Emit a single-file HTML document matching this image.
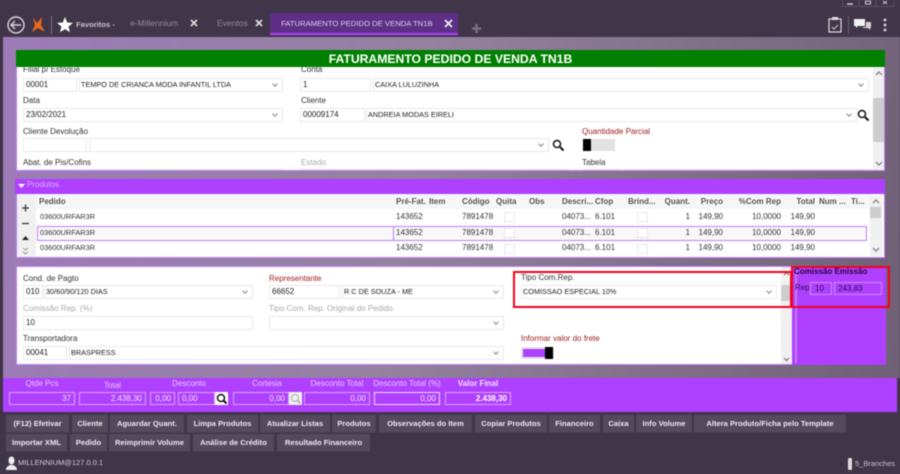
<!DOCTYPE html>
<html><head><meta charset="utf-8">
<style>
html,body{margin:0;padding:0;width:900px;height:474px;overflow:hidden;background:#41354a}
#p{position:relative;width:900px;height:474px;overflow:hidden;font:8px "Liberation Sans",sans-serif;color:#333;filter:blur(.6px)}
#p div,#p span,#p svg{position:absolute}
.b{left:3px;top:37px;width:897px;height:341px;background:linear-gradient(100deg,#9d7bb8 0%,#94829f 45%,#6f6076 100%)}
.w{background:#fff}
.l{white-space:nowrap;line-height:10px;color:#333}
.r{color:#a01f1f}.g{color:#aaa}
.i{box-sizing:border-box;background:#fff;border:1px solid #e8e8e8;line-height:11px;padding-left:2px;white-space:nowrap;overflow:hidden;color:#222}
.n{font-size:7.300px;padding-left:1px}
.c::after{content:"";position:absolute;right:5px;top:3px;width:3px;height:3px;border:solid #888;border-width:0 1px 1px 0;transform:rotate(45deg)}
.t{white-space:nowrap;line-height:10px;color:#333}
.e{text-align:right;width:60px}
.k{box-sizing:border-box;width:11px;height:10px;border:1px solid #e6e6e6;background:#fff}
.h{font-weight:bold;color:#555}
.f{box-sizing:border-box;border:1px solid #d9a6ff;color:#f3e3ff;line-height:11px;text-align:right;padding-right:3px;white-space:nowrap;height:13px;top:392px}
.fl{top:379px;color:#e7c9ff;white-space:nowrap;text-align:center;line-height:10px}
.bt{background:#544a5c;border-bottom:1px solid #4a3f52;color:#eee8f2;font-weight:bold;font-size:7.600px;text-align:center;line-height:17px;height:17px;white-space:nowrap}
.tb{color:#948b9a;top:18px;line-height:11px;font-size:8.500px;white-space:nowrap}
</style></head><body><div id="p">
<div class="b"></div>

<!-- top bar -->
<svg style="left:0;top:0" width="900" height="37" viewBox="0 0 900 37">
<circle cx="16" cy="25" r="8" fill="none" stroke="#d8d4dc" stroke-width="1.400"/>
<path d="M21 25H11M15 21l-4 4 4 4" fill="none" stroke="#d8d4dc" stroke-width="1.400"/>
<path d="M42 17 37 23 33 18 35 25 32 32 38 28 45 32 41 25Z" fill="#e8691a"/>
<path d="M51.500 16V34" stroke="#7b7182"/>
<path d="M65 17l2.200 5.500 5.800.4-4.500 3.700 1.500 5.600-5-3.100-5 3.100 1.500-5.600-4.500-3.700 5.800-.4Z" fill="#fff"/>
<path d="M191 20l6 6M197 20l-6 6M256 20l6 6M262 20l-6 6" stroke="#ddd" stroke-width="1.700"/>
<path d="M476.500 24v9M472 28.500h9" stroke="#7a7180" stroke-width="2.500"/>
<path d="M842.500 0v6.500H859V0M859.500 6.500H876V0M876.500 6.500H894V0" fill="none" stroke="#5b5070"/>
<path d="M847 4h6" stroke="#ccc" stroke-width="1.500"/><rect x="865.500" y="1" width="5" height="3" fill="none" stroke="#ccc"/>
<path d="M883 1l4 3M887 1l-4 3" stroke="#ccc"/>
<rect x="829" y="19" width="12" height="13" fill="none" stroke="#ddd" stroke-width="1.200"/>
<rect x="832" y="17" width="6" height="3" fill="#ddd"/>
<path d="M832 27l2 2 4-4" fill="none" stroke="#ccc"/>
<path d="M848.500 16v18" stroke="#6a5f72"/>
<path d="M854 19h11v7h-7l-2 2v-2h-2Z" fill="#f2f2f2"/><path d="M866 22h5v6h-1v2l-2-2h-5v-1h3Z" fill="#d5d5d5"/>
<circle cx="885" cy="20" r="1.400" fill="#ddd"/><circle cx="885" cy="25" r="1.400" fill="#ddd"/><circle cx="885" cy="30" r="1.400" fill="#ddd"/>
</svg>
<div class="tb" style="left:76px;top:19px;font-size:7.600px;font-weight:bold;color:#c8c3cc">Favoritos -</div>
<div class="tb" style="left:130px">e-Millennium</div>
<div class="tb" style="left:217px">Eventos</div>
<div style="left:270px;top:13px;width:188px;height:20px;background:#5e2f86"></div>
<div style="left:270px;top:33px;width:188px;height:2px;background:#b040ff"></div>
<div class="tb" style="left:281px;font-size:7.700px;color:#ddd0e6">FATURAMENTO PEDIDO DE VENDA TN1B</div>
<svg style="left:444px;top:19px" width="10" height="10"><path d="M1 1l7 7M8 1l-7 7" stroke="#eee" stroke-width="1.700"/></svg>

<!-- header -->
<div style="left:16px;top:50px;width:869px;height:17px;background:#008000;color:#fff;font:bold 12.200px/18px 'Liberation Sans',sans-serif;text-align:center">FATURAMENTO PEDIDO DE VENDA TN1B</div>

<!-- panel 1 -->
<div class="w" style="left:16px;top:67px;width:869px;height:104px;border-bottom:1px solid #c080ff;overflow:hidden;box-sizing:border-box;border-right:1px solid #c080ff;border-left:1px solid #c080ff">
 <div class="l" style="left:6px;top:-2px">Filial p/ Estoque</div>
 <div class="l" style="left:284px;top:-2px">Conta</div>
 <div class="l" style="left:6px;top:29px">Data</div>
 <div class="l" style="left:284px;top:29px">Cliente</div>
 <div class="l" style="left:6px;top:60px">Cliente Devolução</div>
 <div class="l r" style="left:565px;top:60px">Quantidade Parcial</div>
 <div class="l" style="left:6px;top:91px">Abat. de Pis/Cofins</div>
 <div class="l g" style="left:284px;top:91px">Estado</div>
 <div class="l" style="left:565px;top:91px">Tabela</div>
 <div class="i" style="left:6px;top:11px;width:54px;height:14px">00001</div>
 <div class="i c n" style="left:62px;top:11px;width:204px;height:14px">TEMPO DE CRIANCA MODA INFANTIL LTDA</div>
 <div class="i" style="left:283px;top:11px;width:71px;height:14px">1</div>
 <div class="i c n" style="left:356px;top:11px;width:496px;height:14px">CAIXA LULUZINHA</div>
 <div class="i c" style="left:6px;top:41px;width:260px;height:14px">23/02/2021</div>
 <div class="i" style="left:283px;top:41px;width:65px;height:14px">00009174</div>
 <div class="i c n" style="left:349px;top:41px;width:491px;height:14px">ANDREIA MODAS EIRELI</div>
 <div class="i" style="left:6px;top:71px;width:64px;height:14px"></div>
 <div class="i c" style="left:72px;top:71px;width:460px;height:14px"></div>
 <div class="i" style="left:6px;top:102px;width:260px;height:14px"></div>
 <div class="i" style="left:283px;top:102px;width:270px;height:14px"></div>
 <div class="i" style="left:565px;top:102px;width:39px;height:14px"></div>
 <div class="i" style="left:607px;top:102px;width:246px;height:14px"></div>
 <div style="left:566px;top:72px;width:32px;height:12px;background:#e2e2e2"></div>
 <div style="left:566px;top:72px;width:8px;height:12px;background:#000"></div>
 <div style="left:856px;top:0;width:12px;height:103px;background:#f0f0f0"></div>
 <div style="left:856px;top:31px;width:12px;height:44px;background:#cdcdcd"></div>
 <svg style="left:856px;top:0" width="12" height="103"><path d="M3 8l3-3 3 3M3 95l3 3 3-3" fill="none" stroke="#777" stroke-width="1.200"/></svg>
 <svg style="left:840px;top:42px" width="13" height="13"><circle cx="5" cy="5" r="3.500" fill="none" stroke="#111" stroke-width="1.500"/><path d="M8 8l3.500 3.500" stroke="#111" stroke-width="2"/></svg>
 <svg style="left:535px;top:72px" width="13" height="13"><circle cx="5" cy="5" r="3.500" fill="none" stroke="#111" stroke-width="1.500"/><path d="M8 8l3.500 3.500" stroke="#111" stroke-width="2"/></svg>
</div>

<!-- produtos -->
<div style="left:15px;top:179px;width:870px;height:15px;background:#b040ff"></div>
<div class="l" style="left:27px;top:180px;color:#dcb0ff">Produtos</div>
<svg style="left:18px;top:183px" width="8" height="6"><path d="M0 1h7L3.500 5Z" fill="#fff"/></svg>
<div class="w" style="left:16px;top:194px;width:869px;height:64px;box-sizing:border-box;border:solid #c080ff;border-width:0 1px 1px 1px"></div>
<div style="left:17px;top:194px;width:19px;height:63px;background:#f0f0f0"></div>
<div style="left:36px;top:194px;width:834px;height:15px;background:#f6f6f6"></div>
<svg style="left:17px;top:194px" width="19" height="63"><path d="M5 14h7M8.500 10.500v7M5 29.500h7" stroke="#333" stroke-width="1.300"/><path d="M5 46h7L8.500 42Z" fill="#222"/><path d="M6 54l2.500 2 2.500-2M6 58l2.500 2 2.500-2" fill="none" stroke="#999"/></svg>
<div class="l h" style="left:39px;top:197px">Pedido</div>
<div class="l h" style="left:396px;top:197px">Pré-Fat.</div>
<div class="l h" style="left:429px;top:197px">Item</div>
<div class="l h" style="left:462px;top:197px">Código</div>
<div class="l h" style="left:496px;top:197px">Quita</div>
<div class="l h" style="left:529px;top:197px">Obs</div>
<div class="l h" style="left:562px;top:197px">Descri...</div>
<div class="l h" style="left:595px;top:197px">Cfop</div>
<div class="l h" style="left:628px;top:197px">Brind...</div>
<div class="l h e" style="left:630px;top:197px">Quant.</div>
<div class="l h e" style="left:663px;top:197px">Preço</div>
<div class="l h e" style="left:721px;top:197px">%Com Rep</div>
<div class="l h e" style="left:755px;top:197px">Total</div>
<div class="l h" style="left:819px;top:197px">Num ...</div>
<div class="l h" style="left:851px;top:197px">Ti...</div>

<!-- row 1 -->
<div class="t" style="left:40px;top:212px;font-size:7.400px">03600URFAR3R</div><div class="t" style="left:396px;top:212px">143652</div><div class="t" style="left:462px;top:212px">7891478</div><div class="k" style="left:504px;top:212px"></div><div class="t" style="left:562px;top:212px">04073...</div><div class="t" style="left:595px;top:212px">6.101</div><div class="k" style="left:637px;top:212px"></div><div class="t e" style="left:630px;top:212px">1</div><div class="t e" style="left:663px;top:212px">149,90</div><div class="t e" style="left:721px;top:212px">10,0000</div><div class="t e" style="left:755px;top:212px">149,90</div>
<!-- row 2 -->
<div style="left:37px;top:226px;width:830px;height:15px;box-sizing:border-box;border:1.500px solid #c17eff;background:#f8f8f8"></div>
<div style="left:393px;top:227px;width:1px;height:13px;background:#c17eff"></div>
<div class="t" style="left:40px;top:228px;font-size:7.400px">03600URFAR3R</div><div class="t" style="left:396px;top:228px">143652</div><div class="t" style="left:462px;top:228px">7891478</div><div class="k" style="left:504px;top:228px"></div><div class="t" style="left:562px;top:228px">04073...</div><div class="t" style="left:595px;top:228px">6.101</div><div class="k" style="left:637px;top:228px"></div><div class="t e" style="left:630px;top:228px">1</div><div class="t e" style="left:663px;top:228px">149,90</div><div class="t e" style="left:721px;top:228px">10,0000</div><div class="t e" style="left:755px;top:228px">149,90</div>
<!-- row 3 -->
<div class="t" style="left:40px;top:243px;font-size:7.400px">03600URFAR3R</div><div class="t" style="left:396px;top:243px">143652</div><div class="t" style="left:462px;top:243px">7891478</div><div class="k" style="left:504px;top:244px"></div><div class="t" style="left:562px;top:243px">04073...</div><div class="t" style="left:595px;top:243px">6.101</div><div class="k" style="left:637px;top:244px"></div><div class="t e" style="left:630px;top:243px">1</div><div class="t e" style="left:663px;top:243px">149,90</div><div class="t e" style="left:721px;top:243px">10,0000</div><div class="t e" style="left:755px;top:243px">149,90</div>
<!-- table scroll -->
<div style="left:870px;top:196px;width:12px;height:60px;background:#f0f0f0"></div>
<div style="left:870px;top:207px;width:11px;height:11px;background:#cdcdcd"></div>
<svg style="left:870px;top:196px" width="12" height="60"><path d="M3 7l3-3 3 3M3 52l3 3 3-3" fill="none" stroke="#777" stroke-width="1.200"/></svg>

<!-- bottom panel -->
<div class="w" style="left:16px;top:266px;width:776px;height:99px;box-sizing:border-box;border:1px solid #c080ff"></div>
<div class="l" style="left:23px;top:274px">Cond. de Pagto</div>
<div class="l r" style="left:269px;top:274px">Representante</div>
<div class="l" style="left:521px;top:273px">Tipo Com.Rep.</div>
<div class="l g" style="left:23px;top:304px">Comissão Rep. (%)</div>
<div class="l g" style="left:269px;top:304px">Tipo Com. Rep. Original do Pedido</div>
<div class="l" style="left:23px;top:334px">Transportadora</div>
<div class="l r" style="left:521px;top:334px">Informar valor do frete</div>
<div class="i" style="left:23px;top:285px;width:20px;height:14px">010</div>
<div class="i c n" style="left:44px;top:285px;width:209px;height:14px">30/60/90/120 DIAS</div>
<div class="i" style="left:269px;top:285px;width:71px;height:14px">66652</div>
<div class="i c n" style="left:342px;top:285px;width:162px;height:14px">R C DE SOUZA - ME</div>
<div class="i c n" style="left:521px;top:285px;width:256px;height:14px">COMISSAO ESPECIAL 10%</div>
<div class="i" style="left:23px;top:316px;width:230px;height:14px">10</div>
<div class="i c" style="left:269px;top:316px;width:235px;height:14px"></div>
<div class="i" style="left:23px;top:346px;width:44px;height:14px">00041</div>
<div class="i c n" style="left:69px;top:346px;width:435px;height:14px">BRASPRESS</div>
<div style="left:521px;top:347px;width:33px;height:12px;background:#e2e2e2"></div>
<div style="left:523px;top:349px;width:24px;height:8px;background:#b040ff"></div>
<div style="left:545px;top:347px;width:8px;height:12px;background:#000"></div>
<div style="left:781px;top:267px;width:11px;height:97px;background:#f0f0f0"></div>
<div style="left:781px;top:285px;width:11px;height:16px;background:#cdcdcd"></div>
<svg style="left:781px;top:267px" width="11" height="97"><path d="M3 8l2.500-2.500L8 8M3 91l2.500 2.500L8 91" fill="none" stroke="#777" stroke-width="1.200"/></svg>

<!-- comissao -->
<div style="left:792px;top:266px;width:94px;height:99px;background:#b040ff"></div>
<div style="left:795px;top:267px;width:2px;height:96px;background:#c47cf2"></div>
<div class="l" style="left:794px;top:267px;font-weight:bold;color:#200440">Comissão Emissão</div>
<div class="l" style="left:795px;top:283px;color:#2e0a55">Rep</div>
<div class="f" style="left:810px;top:282px;width:22px;text-align:left;padding-left:4px;color:#30085c;border-color:#cd8dff">10</div>
<div class="f" style="left:834px;top:282px;width:48px;text-align:left;padding-left:3px;color:#30085c;border-color:#cd8dff">243,83</div>

<!-- red boxes -->
<div style="left:513px;top:271px;width:279px;height:37px;box-sizing:border-box;border:2px solid #f5001e"></div>
<div style="left:791px;top:266px;width:99px;height:42px;box-sizing:border-box;border:2px solid #f5001e"></div>

<!-- totals -->
<div style="left:3px;top:378px;width:894px;height:34px;background:#b040ff"></div>
<div class="fl" style="left:9px;width:66px">Qtde Pcs</div>
<div class="fl" style="left:79px;width:67px;top:381px">Total</div>
<div class="fl" style="left:150px;width:78px">Desconto</div>
<div class="fl" style="left:233px;width:68px">Cortesia</div>
<div class="fl" style="left:304px;width:66px">Desconto Total</div>
<div class="fl" style="left:372px;width:70px">Desconto Total (%)</div>
<div class="fl" style="left:445px;width:66px;font-weight:bold;color:#f3e3ff">Valor Final</div>
<div class="f" style="left:9px;width:66px">37</div>
<div class="f" style="left:79px;width:67px">2.438,30</div>
<div class="f" style="left:150px;width:25px">0,00</div>
<div class="f" style="left:178px;width:37px;text-align:left;padding-left:3px">0,00</div>
<div style="left:215px;top:392px;width:13px;height:13px;background:#fff"></div>
<svg style="left:215px;top:392px" width="13" height="13"><circle cx="6" cy="6" r="3.500" fill="none" stroke="#111" stroke-width="1.500"/><path d="M8.500 8.500l3 3" stroke="#111" stroke-width="2"/></svg>
<div class="f" style="left:233px;width:56px">0,00</div>
<div style="left:289px;top:392px;width:13px;height:13px;background:#f0f0f0"></div>
<svg style="left:289px;top:392px" width="13" height="13"><circle cx="6" cy="6" r="3.500" fill="none" stroke="#aaa"/><path d="M8.500 8.500l3 3" stroke="#aaa" stroke-width="1.500"/></svg>
<div class="f" style="left:304px;width:66px">0,00</div>
<div class="f" style="left:374px;width:66px;border-color:#f0ddff">0,00</div>
<div class="f" style="left:445px;width:66px;font-weight:bold;color:#fff">2.438,30</div>

<!-- buttons -->
<div class="bt" style="left:6px;top:415px;width:63px">(F12) Efetivar</div>
<div class="bt" style="left:72px;top:415px;width:36px">Cliente</div>
<div class="bt" style="left:110px;top:415px;width:74px">Aguardar Quant.</div>
<div class="bt" style="left:187px;top:415px;width:71px">Limpa Produtos</div>
<div class="bt" style="left:260px;top:415px;width:70px">Atualizar Listas</div>
<div class="bt" style="left:332px;top:415px;width:44px">Produtos</div>
<div class="bt" style="left:379px;top:415px;width:93px">Observações do Item</div>
<div class="bt" style="left:475px;top:415px;width:72px">Copiar Produtos</div>
<div class="bt" style="left:549px;top:415px;width:51px">Financeiro</div>
<div class="bt" style="left:603px;top:415px;width:31px">Caixa</div>
<div class="bt" style="left:636px;top:415px;width:56px">Info Volume</div>
<div class="bt" style="left:694px;top:415px;width:152px">Altera Produto/Ficha pelo Template</div>
<div class="bt" style="left:6px;top:434px;width:61px">Importar XML</div>
<div class="bt" style="left:70px;top:434px;width:37px">Pedido</div>
<div class="bt" style="left:109px;top:434px;width:81px">Reimprimir Volume</div>
<div class="bt" style="left:193px;top:434px;width:81px">Análise de Crédito</div>
<div class="bt" style="left:277px;top:434px;width:93px">Resultado Financeiro</div>

<!-- status -->
<svg style="left:5px;top:456px" width="13" height="15"><ellipse cx="6.500" cy="4.500" rx="3" ry="4" fill="#eee"/><path d="M1 14c0-3 2-4 4-5h3c2 1 4 2 4 5Z" fill="#eee"/></svg>
<div class="l" style="left:18px;top:458px;color:#d2ccd6;font-size:7.500px">MILLENNIUM@127.0.0.1</div>
<div style="left:848px;top:458px;width:4px;height:12px;background:#ddd;border-radius:1px"></div>
<div class="l" style="left:855px;top:459px;color:#c8c2cc;font-size:7.500px">5_Branches</div>
</div></body></html>
